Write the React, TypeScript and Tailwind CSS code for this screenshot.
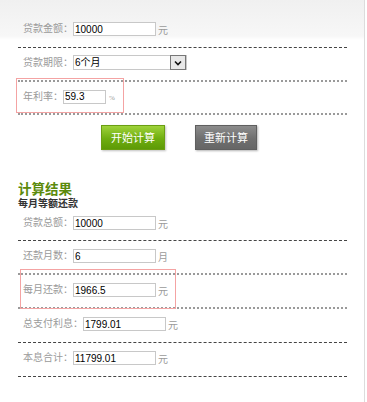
import React from 'react';

const labelCls = 'text-[10px] leading-none text-[#9a9a9a]';
const inputCls =
    'h-[14px] border border-[#c8c8c8] bg-white px-[1px] font-["Liberation_Sans",sans-serif] text-[10px] leading-none text-black outline-none';

interface RowProps {
    label: string;
    value: string;
    unit: string;
    inputWidth?: string;
    line?: 'dark' | 'gray';
    children?: React.ReactNode;
}

const Row: React.FC<RowProps> = ({ label, value, unit, inputWidth = 'w-[83px]', line = 'dark', children }) => {
    return (
        <div
            className={
                line === 'dark'
                    ? 'relative flex h-[34px] items-center border-b border-dashed border-[#444] pb-[3px] pl-[5px]'
                    : 'relative flex h-[34px] items-center border-b-2 border-dotted border-[#9a9a9a] pb-[2px] pl-[5px]'
            }
        >
            {children}
            <span className={labelCls}>{label}</span>
            <input readOnly value={value} className={`${inputCls} ${inputWidth}`} />
            <span className="ml-[2px] mt-[4px] text-[10px] leading-none text-[#9a9a9a]">{unit}</span>
        </div>
    );
};

const Highlight: React.FC<{ className: string }> = ({ className }) => (
    <div className={`pointer-events-none absolute border border-[#f4a3a3] ${className}`} />
);

const App: React.FC = () => {
    return (
        <div
            className="min-h-[402px] w-[365px] border-r border-[#dcdcdc] bg-[linear-gradient(to_bottom,#f0f0f0_0px,#f7f7f7_36px,#ffffff_40px)] pl-[18px] pr-[17px] pt-[14px]"
            style={{ fontFamily: '"Liberation Serif", "Noto Sans CJK SC", serif' }}
        >
            <Row label="贷款金额：" value="10000" unit="元" />

            <div className="flex h-[34px] items-center border-b-2 border-dotted border-[#9a9a9a] pb-[3px] pl-[5px]">
                <span className={labelCls}>贷款期限：</span>
                <div className="flex h-[15px] w-[114px] items-center border border-[#c8c8c8] bg-white">
                    <span
                        className="flex-1 pl-[1px] text-[10px] leading-none text-black"
                        style={{ fontFamily: '"Liberation Sans", "Noto Sans CJK SC", sans-serif' }}
                    >
                        6个月
                    </span>
                    <span className="flex h-[15px] w-[16px] items-center justify-center border border-[#777] bg-[#e8e8e8]">
                        <svg width="8" height="6" viewBox="0 0 8 6">
                            <path d="M1 1.5 L4 4.5 L7 1.5" stroke="#111" strokeWidth="1.6" fill="none" />
                        </svg>
                    </span>
                </div>
            </div>

            <div className="relative flex h-[33px] items-center border-b-2 border-dotted border-[#9a9a9a] pb-[2px] pl-[5px]">
                <Highlight className="-left-[2px] -top-[4px] h-[35px] w-[108px]" />
                <span className={labelCls}>年利率：</span>
                <input readOnly value="59.3" className={`${inputCls} w-[43px]`} />
                <span className="ml-[3px] mt-[4px] text-[7px] leading-none text-[#9a9a9a]">%</span>
            </div>

            <div
                className="flex gap-[30px] pl-[83px] pt-[10px]"
                style={{ fontFamily: '"Noto Sans CJK SC", sans-serif' }}
            >
                <button className="h-[25px] w-[64px] border border-[#6a9e12] bg-[linear-gradient(to_bottom,#9ed23a,#6fae10_55%,#5d9a06)] text-[11px] leading-none text-white shadow-[1px_1px_2px_rgba(0,0,0,0.25)]">
                    开始计算
                </button>
                <button className="h-[25px] w-[62px] border border-[#5f5f5f] bg-[linear-gradient(to_bottom,#8c8c8c,#6f6f6f_55%,#666)] text-[11px] leading-none text-white shadow-[1px_1px_2px_rgba(0,0,0,0.3)]">
                    重新计算
                </button>
            </div>

            <div className="pt-[33px]">
                <div className="text-[13.5px] font-semibold leading-[14px] text-[#5b8a0c]">计算结果</div>
                <div className="mt-[1px] text-[10px] font-semibold leading-[11px] text-[#333]">每月等额还款</div>
            </div>

            <div>
                <div className="relative flex h-[32px] items-center border-b border-dashed border-[#444] pb-[3px] pl-[5px]">
                    <span className={labelCls}>贷款总额：</span>
                    <input readOnly value="10000" className={`${inputCls} w-[83px]`} />
                    <span className="ml-[2px] mt-[4px] text-[10px] leading-none text-[#9a9a9a]">元</span>
                </div>
                <Row label="还款月数：" value="6" unit="月" line="gray" />
                <Row label="每月还款：" value="1966.5" unit="元" line="gray">
                    <Highlight className="left-[2px] -top-[6px] h-[40px] w-[156px]" />
                </Row>
                <Row label="总支付利息：" value="1799.01" unit="元" />
                <Row label="本息合计：" value="11799.01" unit="元" />
            </div>
        </div>
    );
};

export default App;
